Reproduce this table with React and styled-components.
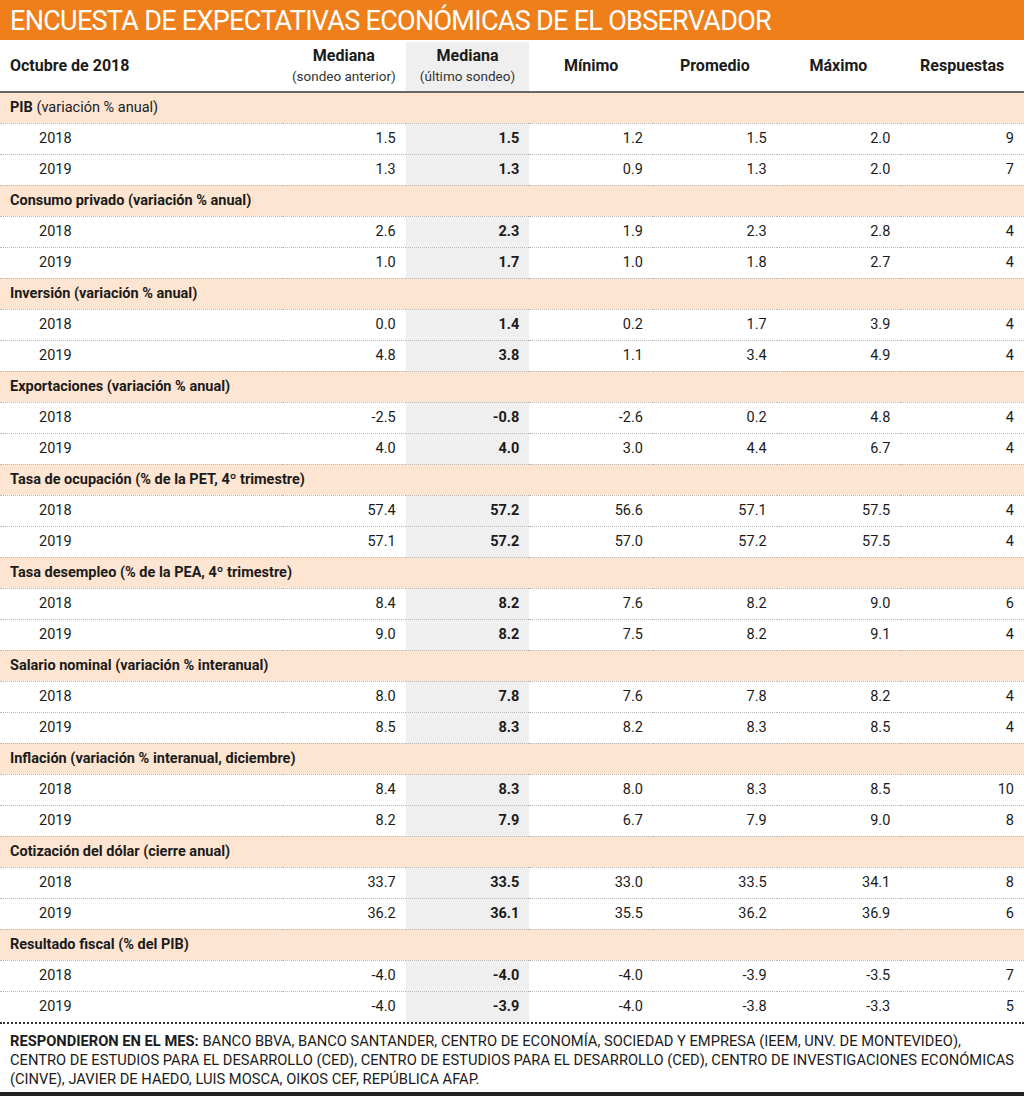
import React from "react";
import styled, { createGlobalStyle } from "styled-components";

const GlobalStyle = createGlobalStyle`
  html, body {
    margin: 0;
    padding: 0;
    background: #fff;
  }
  body {
    font-family: Roboto, "Liberation Sans", sans-serif;
    color: #1b1b1b;
  }
`;

const groups = [
  {
    title: "PIB",
    note: "(variación % anual)",
    rows: [
      ["2018", "1.5", "1.5", "1.2", "1.5", "2.0", "9"],
      ["2019", "1.3", "1.3", "0.9", "1.3", "2.0", "7"],
    ],
  },
  {
    title: "Consumo privado (variación % anual)",
    rows: [
      ["2018", "2.6", "2.3", "1.9", "2.3", "2.8", "4"],
      ["2019", "1.0", "1.7", "1.0", "1.8", "2.7", "4"],
    ],
  },
  {
    title: "Inversión (variación % anual)",
    rows: [
      ["2018", "0.0", "1.4", "0.2", "1.7", "3.9", "4"],
      ["2019", "4.8", "3.8", "1.1", "3.4", "4.9", "4"],
    ],
  },
  {
    title: "Exportaciones (variación % anual)",
    rows: [
      ["2018", "-2.5", "-0.8", "-2.6", "0.2", "4.8", "4"],
      ["2019", "4.0", "4.0", "3.0", "4.4", "6.7", "4"],
    ],
  },
  {
    title: "Tasa de ocupación (% de la PET, 4º trimestre)",
    rows: [
      ["2018", "57.4", "57.2", "56.6", "57.1", "57.5", "4"],
      ["2019", "57.1", "57.2", "57.0", "57.2", "57.5", "4"],
    ],
  },
  {
    title: "Tasa desempleo (% de la PEA, 4º trimestre)",
    rows: [
      ["2018", "8.4", "8.2", "7.6", "8.2", "9.0", "6"],
      ["2019", "9.0", "8.2", "7.5", "8.2", "9.1", "4"],
    ],
  },
  {
    title: "Salario nominal (variación % interanual)",
    rows: [
      ["2018", "8.0", "7.8", "7.6", "7.8", "8.2", "4"],
      ["2019", "8.5", "8.3", "8.2", "8.3", "8.5", "4"],
    ],
  },
  {
    title: "Inflación (variación % interanual, diciembre)",
    rows: [
      ["2018", "8.4", "8.3", "8.0", "8.3", "8.5", "10"],
      ["2019", "8.2", "7.9", "6.7", "7.9", "9.0", "8"],
    ],
  },
  {
    title: "Cotización del dólar (cierre anual)",
    rows: [
      ["2018", "33.7", "33.5", "33.0", "33.5", "34.1", "8"],
      ["2019", "36.2", "36.1", "35.5", "36.2", "36.9", "6"],
    ],
  },
  {
    title: "Resultado fiscal (% del PIB)",
    rows: [
      ["2018", "-4.0", "-4.0", "-4.0", "-3.9", "-3.5", "7"],
      ["2019", "-4.0", "-3.9", "-4.0", "-3.8", "-3.3", "5"],
    ],
  },
];

const Page = styled.div`
  width: 1024px;
  height: 1096px;
  display: flex;
  flex-direction: column;
  overflow: hidden;
`;

const TitleBar = styled.h1`
  margin: 0;
  height: 40px;
  padding: 0 10px;
  background: #ef7f1a;
  color: #fff;
  font-family: Roboto, "Liberation Sans", sans-serif;
  font-weight: 400;
  font-size: 27px;
  line-height: 42px;
  letter-spacing: -0.7px;
  white-space: nowrap;
`;

const Table = styled.table`
  width: 1024px;
  border-collapse: collapse;
  table-layout: fixed;
  font-size: 14.5px;
`;

const HeadRow = styled.tr`
  height: 52px;
  border-bottom: 2px solid #666;
`;

const HeadCell = styled.th`
  padding: ${(p) => (p.$left ? "0 10px" : "0 2px")};
  font-weight: 400;
  text-align: ${(p) => (p.$left ? "left" : "center")};
  vertical-align: middle;
  white-space: nowrap;
  background: ${(p) => (p.$shade ? "#efefef" : "transparent")};
  box-shadow: ${(p) => (p.$shade ? "inset 0 2px 0 #fff" : "none")};
  line-height: 20px;
`;

const HeadMain = styled.span`
  display: block;
  font-weight: 700;
  font-size: 16px;
`;

const HeadSub = styled.span`
  display: block;
  font-size: 13.5px;
  color: #333;
`;

const CategoryRow = styled.tr`
  height: 31px;
  background: #fde5d1;
  border-top: 1px dotted #b9b9b9;
  border-bottom: 1px dotted #b9b9b9;
`;

const CategoryCell = styled.td`
  padding: 0 10px;
  font-weight: 700;
  white-space: nowrap;
`;

const Note = styled.span`
  font-weight: 400;
`;

const DataRow = styled.tr`
  height: 31px;
  border-top: 1px dotted #b9b9b9;
`;

const YearCell = styled.td`
  padding: 0 0 0 39px;
`;

const NumCell = styled.td`
  padding: 0 10px;
  text-align: right;
  font-weight: ${(p) => (p.$shade ? 700 : 400)};
  background: ${(p) => (p.$shade ? "#efefef" : "transparent")};
`;

const Footer = styled.footer`
  flex: 1;
  border-top: 2px dotted #333;
  border-bottom: 4px solid #222;
  padding: 8px 10px 0;
  font-size: 14.7px;
  line-height: 19px;
  white-space: nowrap;
`;

const Strong = styled.strong`
  font-weight: 700;
`;

export default function App() {
  return (
    <Page>
      <GlobalStyle />
      <TitleBar>ENCUESTA DE EXPECTATIVAS ECONÓMICAS DE EL OBSERVADOR</TitleBar>
      <Table>
        <colgroup>
          <col style={{ width: 282 }} />
          <col />
          <col />
          <col />
          <col />
          <col />
          <col />
        </colgroup>
        <thead>
          <HeadRow>
            <HeadCell $left>
              <HeadMain>Octubre de 2018</HeadMain>
            </HeadCell>
            <HeadCell>
              <HeadMain>Mediana</HeadMain>
              <HeadSub>(sondeo anterior)</HeadSub>
            </HeadCell>
            <HeadCell $shade>
              <HeadMain>Mediana</HeadMain>
              <HeadSub>(último sondeo)</HeadSub>
            </HeadCell>
            <HeadCell>
              <HeadMain>Mínimo</HeadMain>
            </HeadCell>
            <HeadCell>
              <HeadMain>Promedio</HeadMain>
            </HeadCell>
            <HeadCell>
              <HeadMain>Máximo</HeadMain>
            </HeadCell>
            <HeadCell>
              <HeadMain>Respuestas</HeadMain>
            </HeadCell>
          </HeadRow>
        </thead>
        {groups.map((g) => (
          <tbody key={g.title}>
            <CategoryRow>
              <CategoryCell colSpan={7}>
                {g.title}
                {g.note && <Note> {g.note}</Note>}
              </CategoryCell>
            </CategoryRow>
            {g.rows.map((r) => (
              <DataRow key={r[0]}>
                <YearCell>{r[0]}</YearCell>
                {r.slice(1).map((v, i) => (
                  <NumCell key={i} $shade={i === 1}>
                    {v}
                  </NumCell>
                ))}
              </DataRow>
            ))}
          </tbody>
        ))}
      </Table>
      <Footer>
        <Strong>RESPONDIERON EN EL MES:</Strong> BANCO BBVA, BANCO SANTANDER,
        CENTRO DE ECONOMÍA, SOCIEDAD Y EMPRESA (IEEM, UNV. DE MONTEVIDEO),
        <br />
        CENTRO DE ESTUDIOS PARA EL DESARROLLO (CED), CENTRO DE ESTUDIOS PARA EL
        DESARROLLO (CED), CENTRO DE INVESTIGACIONES ECONÓMICAS
        <br />
        (CINVE), JAVIER DE HAEDO, LUIS MOSCA, OIKOS CEF, REPÚBLICA AFAP.
      </Footer>
    </Page>
  );
}
